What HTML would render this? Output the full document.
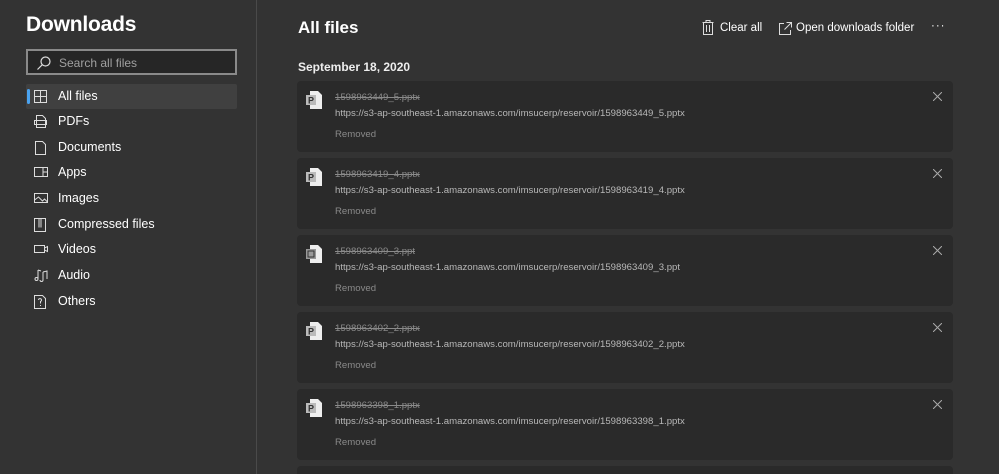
<!DOCTYPE html>
<html style="width:999px;height:474px;overflow:hidden"><head><meta charset="utf-8"><style>
*{box-sizing:border-box;margin:0;padding:0}
body{width:999px;height:474px;overflow:hidden;background:#333;font-family:"Liberation Sans",sans-serif;color:#fff;position:relative}
.side{position:absolute;left:0;top:0;width:257px;height:474px;border-right:1px solid #4a4a4a}
h1{position:absolute;left:26px;top:13px;font-size:21px;font-weight:bold;letter-spacing:-0.2px}
.search{position:absolute;left:26px;top:49px;width:211px;height:26px;border:2px solid #8a8a8a;background:#262626}
.search span{position:absolute;left:31px;top:5px;font-size:12px;color:#a0a0a0}
.search svg{position:absolute;left:8px;top:4px}
.nav{position:absolute;left:26px;width:211px;height:25px;font-size:12.5px;line-height:25px}
.nav span{position:absolute;left:32px}
.nav svg{position:absolute;left:8px;top:6px}
.sel{background:#404040;border-radius:2px}
.sel:before{content:"";position:absolute;left:1px;top:5px;width:3px;height:15px;background:#4aa3f0;border-radius:2px}
h2{position:absolute;left:298px;top:18px;font-size:17px;font-weight:bold}
.date{position:absolute;left:298px;top:60px;font-size:12px;font-weight:bold;color:#eee}
.act{position:absolute;top:22px;font-size:11.5px}
.card{position:absolute;left:297px;width:656px;height:71px;background:#2a2a2a;border-radius:4px}
.card .n{position:absolute;left:38px;top:11px;font-size:9.6px;color:#8a8a8a;text-decoration:line-through}
.card .u{position:absolute;left:38px;top:27px;font-size:9.6px;color:#b8b8b8}
.card .r{position:absolute;left:38px;top:48px;font-size:9.6px;color:#8a8a8a}
.card .x{position:absolute;left:636px;top:11px}
.card .ic{position:absolute;left:9px;top:10px}
</style></head><body>
<div class="side">
<h1>Downloads</h1>
<div class="search"><svg width="16" height="16" viewBox="0 0 16 16" fill="none" stroke="#ddd" stroke-width="1.2"><circle cx="9.5" cy="6.5" r="4.5"/><path d="M6.3 9.7L1.5 14.5"/></svg><span>Search all files</span></div>
<div class="nav sel" style="top:84px"><svg width="13" height="13" viewBox="0 0 13 13" fill="none" stroke="#ddd"><rect x=".5" y=".5" width="12" height="12"/><path d="M6.5 .5v12M.5 6.5h12"/></svg><span>All files</span></div>
<div class="nav" style="top:109px"><svg width="13" height="13" viewBox="0 0 13 13" fill="none" stroke="#ddd"><path d="M2.5 .5h6l3 3v9h-9z"/><rect x=".5" y="5.5" width="12" height="4"/></svg><span>PDFs</span></div>
<div class="nav" style="top:135px"><svg width="13" height="14" viewBox="0 0 13 14" fill="none" stroke="#ddd"><path d="M1.5 .5h7l3 3v10h-10z"/></svg><span>Documents</span></div>
<div class="nav" style="top:160px"><svg width="14" height="12" viewBox="0 0 14 12" fill="none" stroke="#ddd"><rect x=".5" y="1.5" width="13" height="9"/><path d="M9 1.5v9M9 6h4.5"/></svg><span>Apps</span></div>
<div class="nav" style="top:186px"><svg width="14" height="12" viewBox="0 0 14 12" fill="none" stroke="#ddd"><rect x=".5" y="1.5" width="13" height="9"/><path d="M.5 8l4-3 4 4 2-2 3 3"/></svg><span>Images</span></div>
<div class="nav" style="top:212px"><svg width="12" height="14" viewBox="0 0 12 14" fill="none" stroke="#ddd"><rect x=".5" y=".5" width="11" height="13"/><path d="M5 .5v9M7 .5v9"/></svg><span>Compressed files</span></div>
<div class="nav" style="top:237px"><svg width="14" height="12" viewBox="0 0 14 12" fill="none" stroke="#ddd"><rect x=".5" y="2.5" width="10" height="7"/><path d="M10.5 5l3-1.5v5l-3-1.5"/></svg><span>Videos</span></div>
<div class="nav" style="top:263px"><svg width="14" height="13" viewBox="0 0 14 13" fill="none" stroke="#ddd"><path d="M4 1v9M4 10a1.5 1.5 0 1 1-3 0a1.5 1.5 0 0 1 3 0M4 1l3 1M9 3l4-1v8M9 3v8M9 11a1.5 1.5 0 1 1-3 0"/></svg><span>Audio</span></div>
<div class="nav" style="top:289px"><svg width="12" height="14" viewBox="0 0 12 14" fill="none" stroke="#ddd"><path d="M.5 .5h8l3 3v10h-11z"/><path d="M4.5 5a1.5 1.5 0 1 1 2 1.5v2M6.5 10v1"/></svg><span>Others</span></div>
</div>
<h2>All files</h2>
<div class="act" style="left:702px"><svg width="12" height="15" viewBox="0 0 12 15" fill="none" stroke="#ddd" style="position:absolute;top:-2px"><path d="M.5 2.5h11M4 2.5V.5h4v2M1.5 2.5v12h9v-12M4.5 5v7M7.5 5v7"/></svg><span style="position:absolute;left:18px;white-space:nowrap">Clear all</span></div>
<div class="act" style="left:779px"><svg width="13" height="13" viewBox="0 0 13 13" fill="none" stroke="#ddd" style="position:absolute;top:0px"><path d="M5 1.5H.5v11h11V8M7.5.5h5v5M12.5.5L5.5 7.5"/></svg><span style="position:absolute;left:17px;white-space:nowrap">Open downloads folder</span></div>
<div class="act" style="left:931px;top:20px;letter-spacing:1px">···</div>
<div class="date">September 18, 2020</div>
<div class="card" style="top:81px"><svg class="ic" width="16" height="18" viewBox="0 0 16 18"><path d="M4 0h8l4 4v14H4z" fill="#eee"/><rect x="0" y="4" width="10" height="10" fill="#bbb"/><text x="2" y="12.5" font-size="9" font-weight="bold" fill="#333" font-family="Liberation Sans">P</text></svg><div class="n">1598963449_5.pptx</div><div class="u">https://s3-ap-southeast-1.amazonaws.com/imsucerp/reservoir/1598963449_5.pptx</div><div class="r">Removed</div><svg class="x" width="9" height="9" viewBox="0 0 9 9" stroke="#aaa"><path d="M0 0l9 9M9 0L0 9"/></svg></div>
<div class="card" style="top:158px"><svg class="ic" width="16" height="18" viewBox="0 0 16 18"><path d="M4 0h8l4 4v14H4z" fill="#eee"/><rect x="0" y="4" width="10" height="10" fill="#bbb"/><text x="2" y="12.5" font-size="9" font-weight="bold" fill="#333" font-family="Liberation Sans">P</text></svg><div class="n">1598963419_4.pptx</div><div class="u">https://s3-ap-southeast-1.amazonaws.com/imsucerp/reservoir/1598963419_4.pptx</div><div class="r">Removed</div><svg class="x" width="9" height="9" viewBox="0 0 9 9" stroke="#aaa"><path d="M0 0l9 9M9 0L0 9"/></svg></div>
<div class="card" style="top:235px"><svg class="ic" width="16" height="18" viewBox="0 0 16 18"><path d="M4 0h8l4 4v14H4z" fill="#eee"/><rect x="0" y="4" width="10" height="10" fill="#999"/><rect x="2" y="6" width="6" height="6" fill="none" stroke="#333"/></svg><div class="n">1598963409_3.ppt</div><div class="u">https://s3-ap-southeast-1.amazonaws.com/imsucerp/reservoir/1598963409_3.ppt</div><div class="r">Removed</div><svg class="x" width="9" height="9" viewBox="0 0 9 9" stroke="#aaa"><path d="M0 0l9 9M9 0L0 9"/></svg></div>
<div class="card" style="top:312px"><svg class="ic" width="16" height="18" viewBox="0 0 16 18"><path d="M4 0h8l4 4v14H4z" fill="#eee"/><rect x="0" y="4" width="10" height="10" fill="#bbb"/><text x="2" y="12.5" font-size="9" font-weight="bold" fill="#333" font-family="Liberation Sans">P</text></svg><div class="n">1598963402_2.pptx</div><div class="u">https://s3-ap-southeast-1.amazonaws.com/imsucerp/reservoir/1598963402_2.pptx</div><div class="r">Removed</div><svg class="x" width="9" height="9" viewBox="0 0 9 9" stroke="#aaa"><path d="M0 0l9 9M9 0L0 9"/></svg></div>
<div class="card" style="top:389px"><svg class="ic" width="16" height="18" viewBox="0 0 16 18"><path d="M4 0h8l4 4v14H4z" fill="#eee"/><rect x="0" y="4" width="10" height="10" fill="#bbb"/><text x="2" y="12.5" font-size="9" font-weight="bold" fill="#333" font-family="Liberation Sans">P</text></svg><div class="n">1598963398_1.pptx</div><div class="u">https://s3-ap-southeast-1.amazonaws.com/imsucerp/reservoir/1598963398_1.pptx</div><div class="r">Removed</div><svg class="x" width="9" height="9" viewBox="0 0 9 9" stroke="#aaa"><path d="M0 0l9 9M9 0L0 9"/></svg></div>
<div class="card" style="top:466px;height:8px;border-radius:4px 4px 0 0"></div>
</body></html>
